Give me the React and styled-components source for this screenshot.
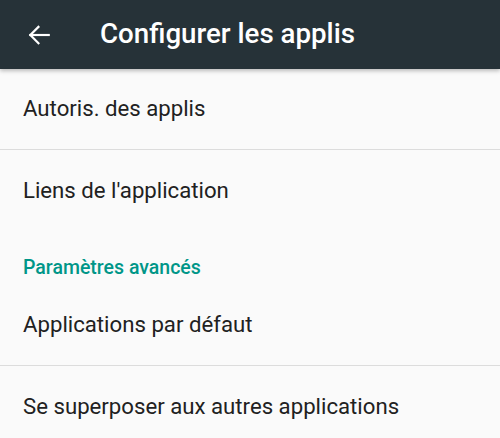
import React from 'react';
import styled, { createGlobalStyle } from 'styled-components';

const Global = createGlobalStyle`
  html, body { margin: 0; padding: 0; background: #fafafa; }
  body { font-family: Roboto, "Noto Sans", sans-serif; overflow: hidden; }
`;

const Screen = styled.div`
  width: 500px; height: 438px; background: #fafafa; display: flex; flex-direction: column; overflow: hidden;
`;

const Toolbar = styled.header`
  height: 69px; flex-shrink: 0; background: #263238; color: #fff; display: flex; align-items: center;
  box-shadow: 0 2px 4px rgba(0,0,0,0.25); position: relative; z-index: 1;
`;

const BackButton = styled.button`
  width: 78px; height: 69px; padding: 0 0 0 26px; border: 0; background: none; color: #fff;
  display: flex; align-items: center; cursor: pointer;
`;

const Title = styled.h1`
  margin: 0 0 0 22px; font-size: 27.7px; font-weight: 500; line-height: 1; padding-bottom: 2px;
`;

const List = styled.div`
  display: flex; flex-direction: column;
`;

const Row = styled.div`
  height: 81px; flex-shrink: 0; display: flex; align-items: center; padding: 0 23px 2px;
  font-size: 22.2px; color: #212121; box-sizing: border-box;
  border-bottom: ${p => (p.$divider ? '1px solid #dcdcdc' : '0')};
`;

const Category = styled.div`
  height: 54px; flex-shrink: 0; padding: 0 23px 6px; box-sizing: border-box; display: flex; align-items: flex-end;
  font-size: 19.5px; font-weight: 500; color: #009688;
`;

function BackArrow() {
  return (
    <svg width="26" height="26" viewBox="0 0 24 24" fill="none" stroke="#fff" strokeWidth="2" strokeLinecap="square">
      <path d="M21 12H4" />
      <path d="M11.5 4.5L4 12l7.5 7.5" />
    </svg>
  );
}

export default function App() {
  return (
    <Screen>
      <Global />
      <Toolbar>
        <BackButton aria-label="Retour"><BackArrow /></BackButton>
        <Title>Configurer les applis</Title>
      </Toolbar>
      <List>
        <Row $divider>Autoris. des applis</Row>
        <Row>Liens de l'application</Row>
        <Category>Paramètres avancés</Category>
        <Row $divider>Applications par défaut</Row>
        <Row>Se superposer aux autres applications</Row>
      </List>
    </Screen>
  );
}
